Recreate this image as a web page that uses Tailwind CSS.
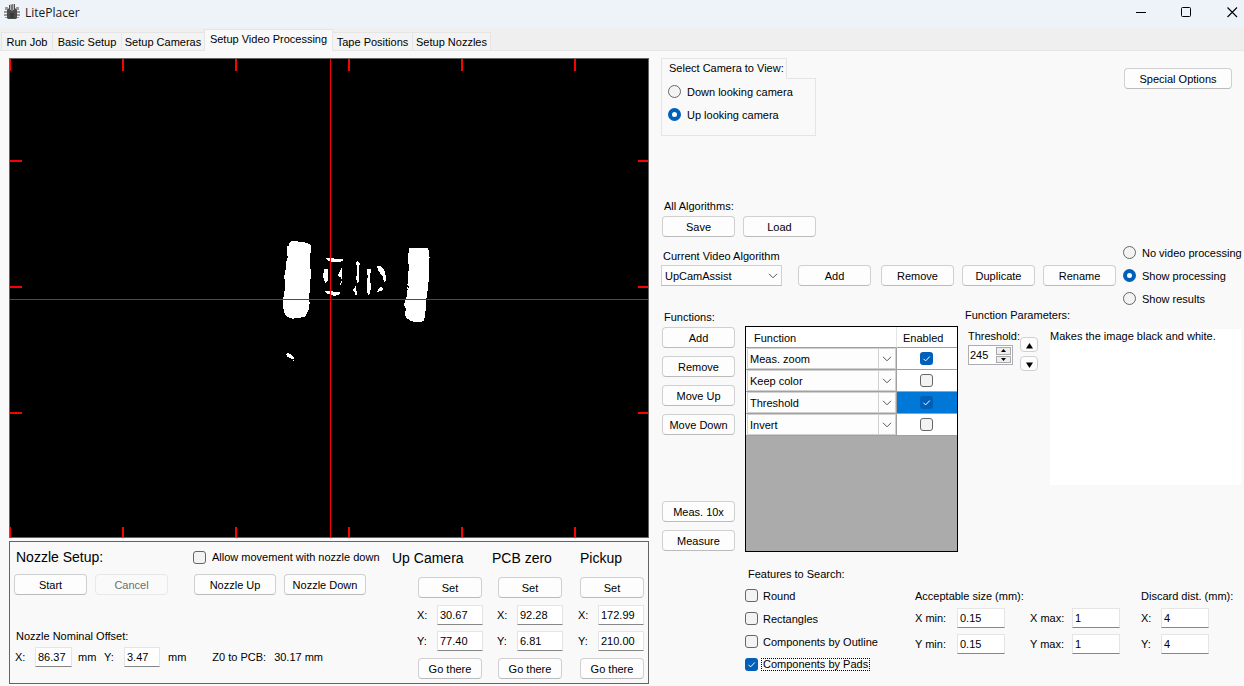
<!DOCTYPE html>
<html lang="en">
<head>
<meta charset="utf-8">
<title>LitePlacer</title>
<script src="https://cdn.jsdelivr.net/npm/@tailwindcss/browser@4"></script>
</head>
<body class="min-h-screen bg-[#f9f9f9] font-['Liberation_Sans',Arial,sans-serif] text-[11px] leading-4 text-black whitespace-nowrap">
<svg class="hidden">
  <symbol id="tick" viewBox="0 0 13 13"><path d="M3.5 6.8l2.1 2.1 4.2-4.4" fill="none" stroke="#fff" stroke-width="1"/></symbol>
  <symbol id="chev" viewBox="0 0 10 6"><path d="M1 .8l4 4 4-4" fill="none" stroke="#555" stroke-width="1"/></symbol>
</svg>

<header class="flex h-7 items-center bg-[#eef3fa] pb-1 pl-1">
  <svg class="size-4" viewBox="0 0 16 16">
    <path d="M1 3h3v3H1zM0 7h4v2H0zM0 10h4v2H0zM1 13h3v1H1zM12 3h3v3h-3zM12 7h4v2h-4zM12 10h4v2h-4zM12 13h3v1h-3z" fill="#999"/>
    <path d="M5 1l6-1v4l2 2v8l-1 1H4l-1-1V6l2-2z" fill="#4b4b4b"/>
    <path d="M6 1h1v5H6zM9 0h1v6H9z" fill="#b5b5b5"/><path d="M7 1h2v6H7z" fill="#777"/><path d="M6 9h4v5H6z" fill="#393939"/>
  </svg>
  <h1 class="ml-[5px] flex-1 pt-0.5 font-['Open_Sans',sans-serif] text-[12px] leading-4 text-[#1a1a1a]">LitePlacer</h1>
  <div class="flex items-center gap-[35px] pr-[6px]">
    <button aria-label="Minimize" class="block"><svg class="h-3 w-[10px]" viewBox="0 0 10 12"><path d="M0 6.5h10" stroke="#000"/></svg></button>
    <button aria-label="Maximize" class="block"><svg class="h-3 w-[11px]" viewBox="0 0 11 12"><rect x=".5" y="1.5" width="9" height="9" rx="1" fill="none" stroke="#000"/></svg></button>
    <button aria-label="Close" class="block"><svg class="h-3 w-[11px]" viewBox="0 0 11 12"><path d="M.5 1.5l9.500 9.500M10 1.500L.5 11" stroke="#000" stroke-width="1.100"/></svg></button>
  </div>
</header>

<nav role="tablist" class="flex h-[23px] items-end border-b border-[#e5e5e5] bg-[#efefef] pl-px">
  <button role="tab" class="h-[18px] w-[52px] border border-b-0 border-[#e5e5e5] bg-[#f3f3f3]">Run Job</button>
  <button role="tab" class="h-[18px] w-[69px] border-t border-r border-[#e5e5e5] bg-[#f3f3f3]">Basic Setup</button>
  <button role="tab" class="h-[18px] w-[82px] border-t border-[#e5e5e5] bg-[#f3f3f3]">Setup Cameras</button>
  <button role="tab" aria-selected="true" class="-mb-px h-[22px] w-[129px] border border-b-0 border-[#e5e5e5] bg-[#f9f9f9] pb-[3px]">Setup Video Processing</button>
  <button role="tab" class="h-[18px] w-20 border-t border-r border-[#e5e5e5] bg-[#f3f3f3]">Tape Positions</button>
  <button role="tab" class="h-[18px] w-[78px] border-t border-r border-[#e5e5e5] bg-[#f3f3f3]">Setup Nozzles</button>
</nav>

<main class="flex items-start gap-3 pt-[7px] pl-[9px]">
  <section class="w-[640px] shrink-0">
    <svg class="block w-full" viewBox="0 0 640 480" role="img" aria-label="Camera view" shape-rendering="crispEdges">
      <rect width="640" height="480" fill="#646464"/>
      <rect x="1" y="1" width="638" height="478" fill="#000"/>
      <g transform="translate(261 162) scale(.33333)" fill="#fff">
        <path d="M57 69L64 64H84L90 67H104L116 71L122 77V97L120 100V128L122 152V176L120 184V206L117 235L119 250L117 266L112 276L108 287L100 292L74 294L68 297L62 293L52 292L44 282L42 270L39 266V240L43 220L46 190L43 175L44 154L48 146L49 124L53 112L51 98V80L57 76Z"/>
        <path d="M418 84h55l3 8v14l3 7-2 8v14l-1 7v40l-2 13-2 26-3 15v13l-2 14-1 22-4 16-9 5h-21l-12-5-6-4-6-2-3-15 3-13-5-10 1-12 4-8 4-16v-29l3-3v-8l-2-4v-6l3-20-1-42 1-20 3-7z"/>
        <path d="M168 114h14l18 3h18v7l-9 1h-27l-7-2-6-6zM163 148l4-2h7v37l-5 3v5l-4-4-4-11-2-7 2-13zM217 144v33l-4-2-2-4-5-2-2-5 6-9 2-8zM213 184h4v4h-4zM210 190h4v4h-4zM165 212h20l5 3h21v6l-8 5-12 1-13-4-10-3zM261 123h4l1 6 4 2-3 6-1 16 2 22-1 7-4 7-2-4-3-9 2-9 2-22-1-10-4-3zM256 198l3 5 1 21h-5v-9l-6-1-2-5 6-5zM293 147l9 1 1 10-5 4 3 8 1 37-2 16-6 1-3-8V183l3-15-4-12zM321 138l11 1 9 8 5 12 2 19-3 10-4-5-3-14-7-8-7-12zM326 205l8-4 5 3-2 7-9 2-2 3h-5zM48 402L54 398L63 403L72 411V416H63L56 411L51 410ZM68 420h4v3h-4z"/>
        <path d="M411 195h3v5h-3zM410 208h3v3h-3zM414 198h4v6h-4zM299 158h3v4h-3z" fill="#000"/>
      </g>
      <g fill="#f00">
        <path d="M1 1h1v12H1zM113 1h2v12h-2zM226 1h2v12h-2zM339 1h2v12h-2zM452 1h2v12h-2zM565 1h2v12h-2z"/>
        <path d="M1 469h1v10H1zM113 469h2v10h-2zM226 469h2v10h-2zM339 469h2v10h-2zM452 469h2v10h-2zM565 469h2v10h-2z"/>
        <path d="M1 102h12v2H1zM1 228h12v2H1zM1 354h12v2H1zM629 102h10v2h-10zM629 228h10v2h-10zM629 354h10v2h-10z"/>
        <path d="M321 1h1v478h-1zM1 241h638v1H1z"/>
      </g>
    </svg>

    <div class="mt-[3px] flex justify-between border border-[#646464] pb-1 pl-1 pr-1">
      <div>
        <div class="flex pt-[7px] pl-0.5">
          <h2 class="w-[177px] font-normal text-[14px] leading-4">Nozzle Setup:</h2>
          <label class="flex items-center gap-[6px]"><input type="checkbox" class="size-[13px] appearance-none rounded-[3px] border border-[#666] bg-[#f3f3f3]">Allow movement with nozzle down</label>
        </div>
        <div class="mt-[9px] flex gap-2">
          <button class="h-[21px] w-[73px] rounded border border-[#d0d0d0] border-b-[#bbb] bg-[#fdfdfd]">Start</button>
          <button disabled class="h-[21px] w-[73px] rounded border border-[#e8e8e8] bg-[#fafafa] text-[#6d6d6d]">Cancel</button>
          <button class="ml-[18px] h-[21px] w-[82px] rounded border border-[#d0d0d0] border-b-[#bbb] bg-[#fdfdfd]">Nozzle Up</button>
          <button class="h-[21px] w-[82px] rounded border border-[#d0d0d0] border-b-[#bbb] bg-[#fdfdfd]">Nozzle Down</button>
        </div>
        <div class="mt-[33px] pl-0.5">Nozzle Nominal Offset:</div>
        <div class="mt-[3px] flex items-center">
          <label class="flex items-center"><span class="w-[21px] pl-px">X:</span><input value="86.37" class="h-5 w-[37px] border border-[#e5e5e5] border-b-[#868686] bg-white px-0.5"></label><span class="ml-[6px] w-[26px]">mm</span>
          <label class="flex items-center"><span class="w-5">Y:</span><input value="3.47" class="h-5 w-9 border border-[#e5e5e5] border-b-[#868686] bg-white px-0.5"></label><span class="ml-2">mm</span>
          <span class="ml-[26px]">Z0 to PCB:</span><span class="ml-2">30.17 mm</span>
        </div>
      </div>

      <div class="flex gap-[15px] pt-2">
        <div class="flex w-[91px] flex-col items-end">
          <h2 class="self-start text-[14px] font-normal leading-4">Up Camera</h2>
          <button class="mt-[11px] mr-px h-[21px] w-16 rounded border border-[#d0d0d0] border-b-[#bbb] bg-[#fdfdfd]">Set</button>
          <label class="mt-[7px] flex items-center"><span class="w-5">X:</span><input value="30.67" class="h-5 w-[46px] border border-[#e5e5e5] border-b-[#868686] bg-white px-0.5"></label>
          <label class="mt-[6px] flex items-center"><span class="w-5">Y:</span><input value="77.40" class="h-5 w-[46px] border border-[#e5e5e5] border-b-[#868686] bg-white px-0.5"></label>
          <button class="mt-[7px] mr-px h-[21px] w-16 rounded border border-[#d0d0d0] border-b-[#bbb] bg-[#fdfdfd]">Go there</button>
        </div>
        <div class="-ml-[6px] flex w-[71px] flex-col items-end">
          <h2 class="self-start text-[14px] font-normal leading-4">PCB zero</h2>
          <button class="mt-[11px] mr-px h-[21px] w-16 rounded border border-[#d0d0d0] border-b-[#bbb] bg-[#fdfdfd]">Set</button>
          <label class="mt-[7px] flex items-center"><span class="w-5">X:</span><input value="92.28" class="h-5 w-[46px] border border-[#e5e5e5] border-b-[#868686] bg-white px-0.5"></label>
          <label class="mt-[6px] flex items-center"><span class="w-5">Y:</span><input value="6.81" class="h-5 w-[46px] border border-[#e5e5e5] border-b-[#868686] bg-white px-0.5"></label>
          <button class="mt-[7px] mr-px h-[21px] w-16 rounded border border-[#d0d0d0] border-b-[#bbb] bg-[#fdfdfd]">Go there</button>
        </div>
        <div class="flex w-[66px] flex-col items-end">
          <h2 class="self-start pl-0.5 text-[14px] font-normal leading-4">Pickup</h2>
          <button class="mt-[11px] h-[21px] w-16 rounded border border-[#d0d0d0] border-b-[#bbb] bg-[#fdfdfd]">Set</button>
          <label class="mt-[7px] flex items-center"><span class="w-5">X:</span><input value="172.99" class="h-5 w-[46px] border border-[#e5e5e5] border-b-[#868686] bg-white px-0.5"></label>
          <label class="mt-[6px] flex items-center"><span class="w-5">Y:</span><input value="210.00" class="h-5 w-[46px] border border-[#e5e5e5] border-b-[#868686] bg-white px-0.5"></label>
          <button class="mt-[7px] h-[21px] w-16 rounded border border-[#d0d0d0] border-b-[#bbb] bg-[#fdfdfd]">Go there</button>
        </div>
      </div>
    </div>
  </section>

  <section class="min-w-0 flex-1">
    <div class="flex items-start justify-between pr-3">
      <fieldset class="w-[155px]">
        <div class="flex h-[21px]">
          <div class="h-[21px] w-[126px] border-t border-r border-l border-[#e5e5e5] bg-[#f9f9f9] pl-[7px] pt-px">Select Camera to View:</div>
          <div class="flex-1 border-b border-[#e5e5e5]"></div>
        </div>
        <div class="h-[57px] border border-t-0 border-[#e5e5e5] pt-px pl-[6px]">
          <label class="flex h-[23px] items-center gap-[6px]"><input type="radio" name="cam" class="size-[13px] appearance-none rounded-full border border-[#666] bg-[#f3f3f3]">Down looking camera</label>
          <label class="flex h-[23px] items-center gap-[6px]"><input type="radio" name="cam" checked class="size-[13px] appearance-none rounded-full border-4 border-[#005fb8] bg-white">Up looking camera</label>
        </div>
      </fieldset>
      <button class="mt-[10px] h-[21px] w-[108px] rounded border border-[#d0d0d0] border-b-[#bbb] bg-[#fdfdfd]">Special Options</button>
    </div>

    <div class="mt-[62px] pl-[3px]">All Algorithms:</div>
    <div class="mt-0.5 flex gap-2 pl-px">
      <button class="h-[21px] w-[73px] rounded border border-[#d0d0d0] border-b-[#bbb] bg-[#fdfdfd]">Save</button>
      <button class="h-[21px] w-[73px] rounded border border-[#d0d0d0] border-b-[#bbb] bg-[#fdfdfd]">Load</button>
    </div>

    <div class="mt-1 flex justify-between">
      <div class="pt-[7px]">
        <label for="algo" class="block pl-0.5">Current Video Algorithm</label>
        <div class="mt-px flex gap-2">
          <div class="mr-2 grid w-[121px] items-center">
            <select id="algo" class="col-start-1 row-start-1 h-[21px] w-full appearance-none border border-[#d0d0d0] border-b-[#bbb] bg-[#fdfdfd] pl-[3px]"><option>UpCamAssist</option></select>
            <svg class="pointer-events-none col-start-1 row-start-1 mr-1 h-[6px] w-[10px] justify-self-end"><use href="#chev"/></svg>
          </div>
          <button class="mr-0.5 h-[21px] w-[73px] rounded border border-[#d0d0d0] border-b-[#bbb] bg-[#fdfdfd]">Add</button>
          <button class="h-[21px] w-[73px] rounded border border-[#d0d0d0] border-b-[#bbb] bg-[#fdfdfd]">Remove</button>
          <button class="h-[21px] w-[73px] rounded border border-[#d0d0d0] border-b-[#bbb] bg-[#fdfdfd]">Duplicate</button>
          <button class="h-[21px] w-[73px] rounded border border-[#d0d0d0] border-b-[#bbb] bg-[#fdfdfd]">Rename</button>
        </div>
      </div>
      <div class="w-[121px]">
        <label class="flex h-[23px] items-center gap-[6px]"><input type="radio" name="proc" class="size-[13px] appearance-none rounded-full border border-[#666] bg-[#f3f3f3]">No video processing</label>
        <label class="flex h-[23px] items-center gap-[6px]"><input type="radio" name="proc" checked class="size-[13px] appearance-none rounded-full border-4 border-[#005fb8] bg-white">Show processing</label>
        <label class="flex h-[23px] items-center gap-[6px]"><input type="radio" name="proc" class="size-[13px] appearance-none rounded-full border border-[#666] bg-[#f3f3f3]">Show results</label>
      </div>
    </div>

    <div class="flex pl-px">
      <div class="flex w-[73px] flex-col gap-2">
        <div class="-mb-[5px] pl-0.5 leading-[14px]">Functions:</div>
        <button class="h-[21px] rounded border border-[#d0d0d0] border-b-[#bbb] bg-[#fdfdfd]">Add</button>
        <button class="h-[21px] rounded border border-[#d0d0d0] border-b-[#bbb] bg-[#fdfdfd]">Remove</button>
        <button class="h-[21px] rounded border border-[#d0d0d0] border-b-[#bbb] bg-[#fdfdfd]">Move Up</button>
        <button class="h-[21px] rounded border border-[#d0d0d0] border-b-[#bbb] bg-[#fdfdfd]">Move Down</button>
        <button class="mt-[58px] h-[21px] rounded border border-[#d0d0d0] border-b-[#bbb] bg-[#fdfdfd]">Meas. 10x</button>
        <button class="h-[21px] rounded border border-[#d0d0d0] border-b-[#bbb] bg-[#fdfdfd]">Measure</button>
      </div>

      <div class="mt-4 ml-[10px] h-[226px] w-[213px] border border-black bg-[#ababab]">
        <table class="w-full table-fixed border-separate border-spacing-0 bg-white text-left">
          <colgroup><col class="w-[151px]"><col></colgroup>
          <thead><tr class="h-[21px]"><th class="border-r border-b border-r-[#e5e5e5] border-b-[#a0a0a0] p-0 pt-px pl-2 font-normal">Function</th><th class="border-b border-[#a0a0a0] p-0 pt-px pl-[6px] font-normal">Enabled</th></tr></thead>
          <tbody>
            <tr class="h-[22px]">
              <td class="border-r border-b border-[#a0a0a0] p-0 pl-px"><div class="grid items-center"><select aria-label="Function 1" class="col-start-1 row-start-1 h-[21px] w-full appearance-none border border-[#d0d0d0] bg-[#fdfdfd] pl-0.5"><option>Meas. zoom</option></select><span class="pointer-events-none col-start-1 row-start-1 flex h-[19px] w-[18px] items-center justify-center justify-self-end border-l border-[#d0d0d0] pr-px"><svg class="h-[6px] w-[10px]"><use href="#chev"/></svg></span></div></td>
              <td class="border-b border-[#a0a0a0] p-0 pr-0.5"><div class="grid place-items-center"><input type="checkbox" aria-label="Enable Meas. zoom" checked class="col-start-1 row-start-1 size-[13px] appearance-none rounded-[3px] bg-[#005fb8]"><svg class="pointer-events-none col-start-1 row-start-1 size-[13px]"><use href="#tick"/></svg></div></td>
            </tr>
            <tr class="h-[22px]">
              <td class="border-r border-b border-[#a0a0a0] p-0 pl-px"><div class="grid items-center"><select aria-label="Function 2" class="col-start-1 row-start-1 h-[21px] w-full appearance-none border border-[#d0d0d0] bg-[#fdfdfd] pl-0.5"><option>Keep color</option></select><span class="pointer-events-none col-start-1 row-start-1 flex h-[19px] w-[18px] items-center justify-center justify-self-end border-l border-[#d0d0d0] pr-px"><svg class="h-[6px] w-[10px]"><use href="#chev"/></svg></span></div></td>
              <td class="border-b border-[#a0a0a0] p-0 pr-0.5"><div class="grid place-items-center"><input type="checkbox" aria-label="Enable Keep color" class="size-[13px] appearance-none rounded-[3px] border border-[#666] bg-[#f3f3f3]"></div></td>
            </tr>
            <tr class="h-[22px]">
              <td class="border-r border-b border-[#a0a0a0] p-0 pl-px"><div class="grid items-center"><select aria-label="Function 3" class="col-start-1 row-start-1 h-[21px] w-full appearance-none border border-[#d0d0d0] bg-[#fdfdfd] pl-0.5"><option>Threshold</option></select><span class="pointer-events-none col-start-1 row-start-1 flex h-[19px] w-[18px] items-center justify-center justify-self-end border-l border-[#d0d0d0] pr-px"><svg class="h-[6px] w-[10px]"><use href="#chev"/></svg></span></div></td>
              <td class="border-b border-[#a0a0a0] bg-[#0078d7] p-0 pr-0.5"><div class="grid place-items-center"><input type="checkbox" aria-label="Enable Threshold" checked class="col-start-1 row-start-1 size-[13px] appearance-none rounded-[3px] bg-[#005fb8]"><svg class="pointer-events-none col-start-1 row-start-1 size-[13px]"><use href="#tick"/></svg></div></td>
            </tr>
            <tr class="h-[22px]">
              <td class="border-r border-b border-[#a0a0a0] p-0 pl-px"><div class="grid items-center"><select aria-label="Function 4" class="col-start-1 row-start-1 h-[21px] w-full appearance-none border border-[#d0d0d0] bg-[#fdfdfd] pl-0.5"><option>Invert</option></select><span class="pointer-events-none col-start-1 row-start-1 flex h-[19px] w-[18px] items-center justify-center justify-self-end border-l border-[#d0d0d0] pr-px"><svg class="h-[6px] w-[10px]"><use href="#chev"/></svg></span></div></td>
              <td class="border-b border-[#a0a0a0] p-0 pr-0.5"><div class="grid place-items-center"><input type="checkbox" aria-label="Enable Invert" class="size-[13px] appearance-none rounded-[3px] border border-[#666] bg-[#f3f3f3]"></div></td>
            </tr>
          </tbody>
        </table>
      </div>

      <div class="ml-[7px] min-w-0 flex-1">
        <div class="leading-[10px]">Function Parameters:</div>
        <div class="mt-[9px] flex pr-[3px] pl-[3px]">
          <div class="w-[52px]">
            <label for="thr" class="block leading-[14px]">Threshold:</label>
            <div class="mt-0.5 flex h-5 w-[45px] border border-[#abadb3] bg-white">
              <input id="thr" value="245" class="w-[27px] bg-white pl-px">
              <div class="flex w-4 flex-col gap-px py-px pr-px">
                <button aria-label="Increase" class="flex flex-1 items-center justify-center border border-[#aaa] bg-[#eee]"><svg class="h-[3px] w-[5px]" viewBox="0 0 5 3"><path d="M0 3L2.500 0 5 3z"/></svg></button>
                <button aria-label="Decrease" class="flex flex-1 items-center justify-center border border-[#aaa] bg-[#eee]"><svg class="h-[3px] w-[5px]" viewBox="0 0 5 3"><path d="M0 0h5L2.500 3z"/></svg></button>
              </div>
            </div>
          </div>
          <div class="flex w-[18px] flex-col gap-1 pt-2">
            <button aria-label="Up" class="flex h-[15px] items-end justify-center rounded border border-[#d0d0d0] bg-[#fdfdfd] pb-0.5"><svg class="h-[6px] w-[7px]" viewBox="0 0 7 6"><path d="M0 5.500L3.500 0 7 5.500z"/></svg></button>
            <button aria-label="Down" class="flex h-[15px] items-end justify-center rounded border border-[#d0d0d0] bg-[#fdfdfd] pb-0.5"><svg class="h-[6px] w-[7px]" viewBox="0 0 7 6"><path d="M0 .5h7L3.500 6z"/></svg></button>
          </div>
          <textarea aria-label="Function description" readonly class="ml-3 block h-[156px] min-w-0 flex-1 resize-none bg-white leading-[14px]">Makes the image black and white.</textarea>
        </div>
      </div>
    </div>

    <div class="flex items-start pt-[14px] pl-[84px]">
      <div class="w-[170px]">
        <div class="pl-[3px]">Features to Search:</div>
        <label class="mt-0.5 flex h-[23px] items-center gap-[5px]"><input type="checkbox" class="size-[13px] appearance-none rounded-[3px] border border-[#666] bg-[#f3f3f3]">Round</label>
        <label class="flex h-[23px] items-center gap-[5px]"><input type="checkbox" class="size-[13px] appearance-none rounded-[3px] border border-[#666] bg-[#f3f3f3]">Rectangles</label>
        <label class="flex h-[23px] items-center gap-[5px]"><input type="checkbox" class="size-[13px] appearance-none rounded-[3px] border border-[#666] bg-[#f3f3f3]">Components by Outline</label>
        <label class="flex h-[23px] items-center gap-[3px]"><span class="grid"><input type="checkbox" checked class="col-start-1 row-start-1 size-[13px] appearance-none rounded-[3px] bg-[#005fb8]"><svg class="pointer-events-none col-start-1 row-start-1 size-[13px]"><use href="#tick"/></svg></span><span class="border border-dotted border-black px-px leading-[11px]">Components by Pads</span></label>
      </div>
      <div class="pt-[22px]">
        <div>Acceptable size (mm):</div>
        <div class="mt-1 flex gap-[25px]">
          <div class="flex flex-col gap-[6px]">
            <label class="flex items-center"><span class="w-[42px]">X min:</span><input value="0.15" class="h-5 w-12 border border-[#e5e5e5] border-b-[#868686] bg-white px-0.5"></label>
            <label class="flex items-center"><span class="w-[42px]">Y min:</span><input value="0.15" class="h-5 w-12 border border-[#e5e5e5] border-b-[#868686] bg-white px-0.5"></label>
          </div>
          <div class="flex flex-col gap-[6px]">
            <label class="flex items-center"><span class="w-[42px]">X max:</span><input value="1" class="h-5 w-12 border border-[#e5e5e5] border-b-[#868686] bg-white px-0.5"></label>
            <label class="flex items-center"><span class="w-[42px]">Y max:</span><input value="1" class="h-5 w-12 border border-[#e5e5e5] border-b-[#868686] bg-white px-0.5"></label>
          </div>
        </div>
      </div>
      <div class="ml-[21px] pt-[22px]">
        <div>Discard dist. (mm):</div>
        <div class="mt-1 flex flex-col gap-[6px]">
          <label class="flex items-center"><span class="w-5">X:</span><input value="4" class="h-5 w-12 border border-[#e5e5e5] border-b-[#868686] bg-white px-0.5"></label>
          <label class="flex items-center"><span class="w-5">Y:</span><input value="4" class="h-5 w-12 border border-[#e5e5e5] border-b-[#868686] bg-white px-0.5"></label>
        </div>
      </div>
    </div>
  </section>
</main>
</body>
</html>
